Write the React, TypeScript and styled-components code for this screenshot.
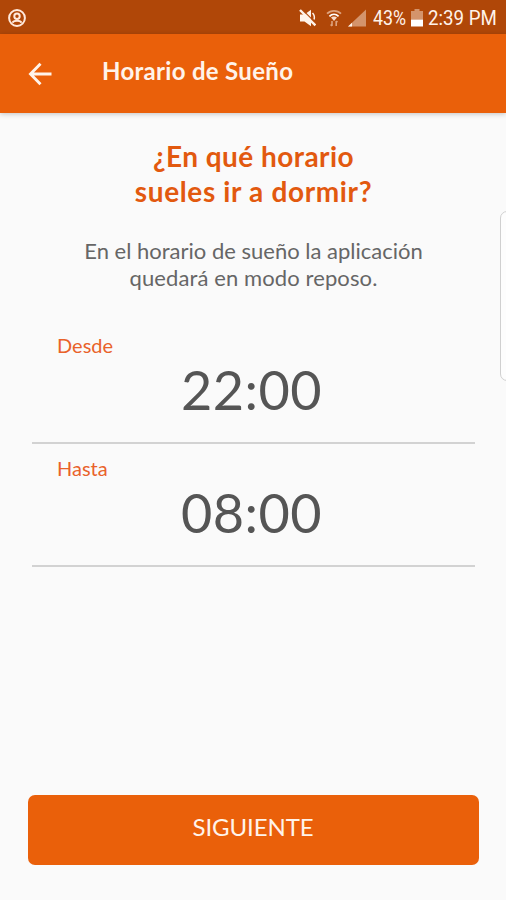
import { useState } from 'react'
import styled, { createGlobalStyle } from 'styled-components'

const schedule = [
  { id: 'from', label: 'Desde', time: '22:00' },
  { id: 'to', label: 'Hasta', time: '08:00' },
]

const StatusBar = () => (
  <StatusWrap>
    <svg width="18" height="18" viewBox="0 0 18 18" fill="none" stroke="#ffe9dc">
      <circle cx="9" cy="9" r="7.9" strokeWidth="2" />
      <circle cx="9" cy="7.2" r="2.7" strokeWidth="2" />
      <path d="M4.6 13.8C5.2 12 7 11.8 9 11.8s3.8.2 4.4 2" strokeWidth="2" />
    </svg>
    <StatusGroup>
      <svg width="18" height="18" viewBox="0 0 18 18">
        <path d="M2 5.5h4.5L13 .8v16.4l-6.5-4.700H2z" fill="#fff3ea" />
        <path d="M14.500 4c1.600 1.500 2.200 4 1.600 6.500" fill="none" stroke="#fff3ea" strokeWidth="1.500" />
        <path d="M4 .4 18 14.4" stroke="#b04708" strokeWidth="1.3" />
        <path d="M2 1 17.400 16.400" stroke="#fff3ea" strokeWidth="2.4" />
      </svg>
      <WifiIcon width="16" height="18" viewBox="0 0 16 18" fill="none">
        <path d="M1 4.7C4.8.9 11.2.9 15 4.7" stroke="#dda27e" strokeWidth="1.8" />
        <path d="M3.4 7.3c2.7-2.5 6.5-2.5 9.2 0" stroke="#fff" strokeWidth="1.8" />
        <path d="M5 8.5 8 12l3-3.5C9.4 7.2 6.6 7.2 5 8.5z" fill="#f8dccb" />
        <path d="M6 12v5M4.6 15.500 6 17M10.200 17v-5M11.500 13.300 10.200 12" stroke="#dda27e" strokeWidth="1.6" />
      </WifiIcon>
      <SignalIcon width="18" height="18" viewBox="0 0 18 18">
        <path d="M0 17.5 18 .5v17z" fill="#d4946c" />
        <path d="M0 17.5 4 13.700v3.800z" fill="#fff3ea" />
      </SignalIcon>
      <Percent>43%</Percent>
      <BatteryIcon width="12" height="18" viewBox="0 0 12 18">
        <path d="M3.5 0h5v2H12v8.500H0V2h3.500z" fill="#d4946c" />
        <path d="M0 10.500h12v7H0z" fill="#fff" />
      </BatteryIcon>
      <Clock>2:39 PM</Clock>
    </StatusGroup>
  </StatusWrap>
)

const App = () => {
  const [times] = useState(schedule)

  return (
    <>
      <GlobalStyle />
      <Screen>
        <StatusBar />
        <Header>
          <BackButton aria-label="Volver">
            <svg width="24" height="24" viewBox="0 0 24 24" fill="none" stroke="#fff3ea" strokeWidth="2.9">
              <path d="M23.5 12H2.500M12.500 1.800 2.500 12l10 10.200" />
            </svg>
          </BackButton>
          <HeaderTitle>Horario de Sueño</HeaderTitle>
        </Header>
        <Content>
          <Question>
            <Line $spacing="0.45px">¿En qué horario</Line>
            <Line $spacing="0.65px">sueles ir a dormir?</Line>
          </Question>
          <Description>
            <Line>En el horario de sueño la aplicación</Line>
            <Line $spacing="0.1px">quedará en modo reposo.</Line>
          </Description>
          {times.map((item) => (
            <TimeField key={item.id}>
              <Label>{item.label}</Label>
              <Time>{item.time}</Time>
            </TimeField>
          ))}
        </Content>
        <NextButton>SIGUIENTE</NextButton>
        <EdgeHandle />
      </Screen>
    </>
  )
}

export default App

const GlobalStyle = createGlobalStyle`
  * {
    box-sizing: border-box;
  }
  body, h1, h2, p {
    margin: 0;
  }
  body {
    background-color: #fafafa;
    font-family: Lato, 'Open Sans', sans-serif;
  }
  button {
    border: none;
    padding: 0;
    font-family: inherit;
    cursor: pointer;
  }
  svg {
    display: block;
    flex-shrink: 0;
  }
`

const Screen = styled.div`
  width: 100%;
  height: 900px;
  display: flex;
  flex-direction: column;
  position: relative;
  overflow: hidden;
  background-color: #fafafa;
`

const StatusWrap = styled.div`
  height: 34px;
  flex-shrink: 0;
  display: flex;
  align-items: center;
  justify-content: space-between;
  padding: 1px 9px 0 8px;
  background-color: #b04708;
`

const StatusGroup = styled.div`
  display: flex;
  align-items: center;
  color: #fff3ea;
  font-family: Roboto, sans-serif;
  font-size: 20px;
  line-height: 34px;
  white-space: nowrap;
`

const WifiIcon = styled.svg`
  margin-left: 10px;
`

const SignalIcon = styled.svg`
  margin-left: 6px;
`

const BatteryIcon = styled.svg`
  margin-left: 4px;
`

const Percent = styled.span`
  width: 34px;
  margin-left: 7px;
  transform: scaleX(0.89);
  transform-origin: left;
`

const Clock = styled.span`
  width: 69px;
  margin-left: 5px;
  transform: scaleX(0.935);
  transform-origin: left;
`

const Header = styled.header`
  height: 79px;
  flex-shrink: 0;
  display: flex;
  align-items: center;
  padding-left: 28px;
  background-color: #ea600a;
  box-shadow: 0 1px 5px rgba(0, 0, 0, 0.22);
`

const BackButton = styled.button`
  width: 24px;
  height: 24px;
  background: none;
`

const HeaderTitle = styled.h1`
  margin: 0 0 5px 50px;
  color: #fff3ea;
  font-size: 24px;
  font-weight: 700;
  line-height: 30px;
  letter-spacing: 0.3px;
  white-space: nowrap;
`

const Content = styled.main`
  flex: 1;
  display: flex;
  flex-direction: column;
  padding: 26px 31px 0 32px;
`

const Line = styled.span<{ $spacing?: string }>`
  display: block;
  letter-spacing: ${({ $spacing }) => $spacing || 'normal'};
  white-space: nowrap;
`

const Question = styled.h2`
  color: #e2590f;
  font-size: 28px;
  font-weight: 700;
  line-height: 35px;
  text-align: center;
`

const Description = styled.p`
  margin-top: 28px;
  color: #666;
  font-size: 22px;
  line-height: 27px;
  text-align: center;
`

const TimeField = styled.div`
  height: 123px;
  display: flex;
  flex-direction: column;
  border-bottom: 2px solid #d2d2d2;

  &:first-of-type {
    margin-top: 30px;
  }
`

const Label = styled.span`
  padding: 11px 0 0 25px;
  color: #e9622a;
  font-size: 20px;
  line-height: 26px;
`

const Time = styled.span`
  padding-right: 4px;
  color: #555;
  font-size: 54px;
  line-height: 64px;
  letter-spacing: 0.4px;
  text-align: center;
`

const NextButton = styled.button`
  height: 70px;
  flex-shrink: 0;
  margin: 0 27px 35px 28px;
  padding: 0 1px 7px 0;
  border-radius: 7px;
  background-color: #ea600a;
  color: #fff3ea;
  font-size: 24px;
  letter-spacing: -0.1px;
`

// edge panel handle, sits over the content on the right side
const EdgeHandle = styled.div`
  position: absolute;
  top: 211px;
  right: -8px;
  width: 14px;
  height: 170px;
  border: 1px solid #d0d0d0;
  border-radius: 8px;
  background-color: #fdfdfd;
`
